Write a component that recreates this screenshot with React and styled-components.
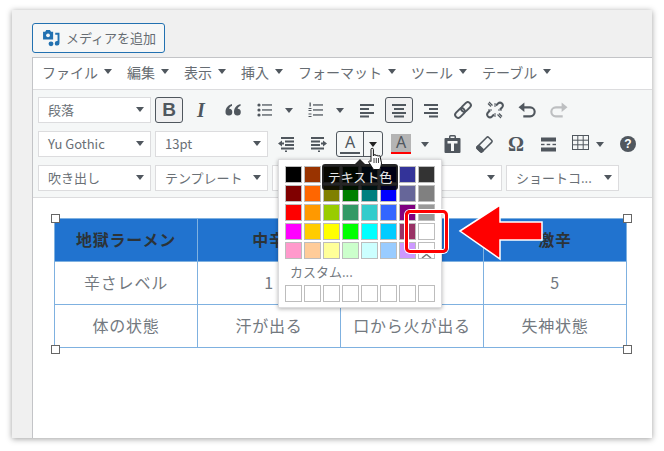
import React from "react";
import styled, { createGlobalStyle } from "styled-components";

const Global = createGlobalStyle`
  html, body { margin: 0; padding: 0; background: #fff; }
  body { font-family: "Noto Sans CJK JP", "Noto Sans", sans-serif; color: #50575e; }
  * { box-sizing: border-box; }
`;

const Page = styled.div`
  position: relative;
  width: 664px;
  height: 451px;
  padding: 10px 12px 13px;
  overflow: hidden;
`;
const Win = styled.div`
  height: 428px;
  background: #f0f0f0;
  box-shadow: 0 1px 6px rgba(0, 0, 0, 0.38);
  padding: 13px 0 0 20px;
  display: flex;
  flex-direction: column;
  align-items: flex-start;
`;
const MediaButton = styled.div`
  width: 133px;
  height: 30px;
  border: 1px solid #2271b1;
  border-radius: 3px;
  background: #f6f7f7;
  display: flex;
  align-items: center;
  gap: 6px;
  padding: 0 0 1px 9px;
  font-size: 13px;
  color: #666c72;
  margin-bottom: 4px;
`;
const Editor = styled.div`
  flex: 1;
  align-self: stretch;
  border-top: 1px solid #c3c4c7;
  border-left: 1px solid #c3c4c7;
  display: flex;
  flex-direction: column;
  background: #fff;
`;
const MenuBar = styled.div`
  height: 32px;
  padding: 0 0 4px 9px;
  display: flex;
  align-items: center;
  gap: 15px;
  background: #fff;
  border-bottom: 1px solid #dcdcde;
`;
const MenuItem = styled.div`
  display: flex;
  align-items: center;
  gap: 6px;
  font-size: 14px;
  line-height: 20px;
  color: #666c72;
  white-space: nowrap;
`;
const Caret = styled.i`
  display: block;
  width: 0;
  height: 0;
  border-left: 4px solid transparent;
  border-right: 4px solid transparent;
  border-top: 5px solid ${(p) => p.$color || "#50575e"};
`;
const Toolbar = styled.div`
  height: 108px;
  background: #f5f7f7;
  border-bottom: 1px solid #dcdcde;
  padding: 7px 0 0 5px;
  display: flex;
  flex-direction: column;
  gap: 8px;
`;
const Row = styled.div`
  display: flex;
  align-items: center;
  gap: 4px;
  height: 26px;
`;
const Select = styled.div`
  width: 113px;
  height: 26px;
  background: #fff;
  border: 1px solid #dcdcde;
  display: flex;
  align-items: center;
  justify-content: space-between;
  padding: 0 6px 2px 9px;
  font-size: 13px;
  color: #6a7076;
  white-space: nowrap;
`;
const Btn = styled.div`
  width: 28px;
  height: 26px;
  display: flex;
  align-items: center;
  justify-content: center;
  flex: none;
  border: 1px solid ${(p) => (p.$active ? "#50575e" : "transparent")};
  border-radius: 3px;
  background: ${(p) => (p.$active ? "#f0f0f1" : "transparent")};
  color: #50575e;
`;
const Split = styled.div`
  display: flex;
  align-items: center;
  flex: none;
`;
const CaretCell = styled.div`
  width: ${(p) => p.$w || 19}px;
  height: 26px;
  display: flex;
  align-items: center;
  justify-content: center;
`;
const BoldGlyph = styled.span`
  font: bold 19px "Liberation Sans", sans-serif;
`;
const ItalicGlyph = styled.span`
  font: italic bold 20px "Liberation Serif", serif;
`;
const OmegaGlyph = styled.span`
  font: bold 20px "Liberation Serif", serif;
  line-height: 20px;
`;
const TextColorBox = styled.div`
  width: 47px;
  height: 26px;
  display: flex;
  flex: none;
  border: 1px solid #50575e;
  border-radius: 3px;
`;
const ColorCell = styled.div`
  width: 27px;
  height: 24px;
  border-right: 1px solid #50575e;
  display: flex;
  align-items: center;
  justify-content: center;
`;
const ArrowCell = styled.div`
  flex: 1;
  display: flex;
  align-items: center;
  justify-content: center;
`;
const LetterA = styled.span`
  display: block;
  width: 20px;
  height: 20px;
  text-align: center;
  font: 16px/17px "Noto Sans", sans-serif;
  color: #50575e;
  border-bottom: 2px solid ${(p) => p.$bar};
  background: ${(p) => p.$bg || "transparent"};
`;
const HelpDot = styled.span`
  width: 16px;
  height: 16px;
  border-radius: 50%;
  background: #50575e;
  color: #fff;
  font: bold 12px/16px "Liberation Sans", sans-serif;
  text-align: center;
  margin-left: 8px;
`;
const Content = styled.div`
  flex: 1;
  background: #fff;
  padding: 20px 25px 0 21px;
`;
const Table = styled.table`
  position: relative;
  width: 573px;
  border-collapse: collapse;
  table-layout: fixed;
  font-size: 16px;
  letter-spacing: 0.8px;
  color: #73797f;
  text-align: center;
`;
const Th = styled.th`
  height: 43px;
  padding: 0 0 3px;
  background: #2173cf;
  border: 1px solid #7fb1e0;
  color: #2c3338;
  font-weight: 700;
`;
const Td = styled.td`
  height: 43px;
  padding: 0 0 2px;
  border: 1px solid #7fb1e0;
  font-weight: 400;
`;
const Handle = styled.span`
  position: absolute;
  width: 9px;
  height: 9px;
  background: #fff;
  border: 1px solid #666;
  left: ${(p) => p.$x}px;
  top: ${(p) => p.$y}px;
`;
const Popover = styled.div`
  position: absolute;
  left: 278px;
  top: 159px;
  width: 164px;
  height: 149px;
  background: #fff;
  border: 1px solid #dcdcde;
  box-shadow: 0 1px 4px rgba(0, 0, 0, 0.3);
  padding: 6px;
`;
const SwatchGrid = styled.div`
  display: grid;
  grid-template-columns: repeat(8, 17px);
  gap: 2px;
`;
const Swatch = styled.div`
  position: relative;
  width: 17px;
  height: 17px;
  border: 1px solid #bdbdbd;
  background: ${(p) => p.$c};
  overflow: hidden;
`;
const Chevron = styled.svg`
  position: absolute;
  left: 2px;
  bottom: -1px;
`;
const CustomLabel = styled.div`
  font-size: 13px;
  line-height: 18px;
  color: #73797f;
  margin: 4px 0 4px 5px;
`;
const Tooltip = styled.div`
  position: absolute;
  left: 322px;
  top: 164px;
  width: 76px;
  height: 26px;
  background: rgba(0, 0, 0, 0.85);
  border-radius: 3px;
  color: #e8e8e8;
  font-size: 13px;
  line-height: 25px;
  text-align: center;
  white-space: nowrap;
  &::before {
    content: "";
    position: absolute;
    left: 33px;
    top: -5px;
    border-left: 5px solid transparent;
    border-right: 5px solid transparent;
    border-bottom: 5px solid rgba(0, 0, 0, 0.85);
  }
`;
const Highlight = styled.div`
  position: absolute;
  left: 405px;
  top: 210px;
  width: 43px;
  height: 43px;
  border: 3px solid #f00;
  border-radius: 5px;
  box-shadow: 0 0 0 1px #fff, inset 0 0 0 1px #fff;
`;
const Overlay = styled.svg`
  position: absolute;
  left: ${(p) => p.$x}px;
  top: ${(p) => p.$y}px;
  overflow: visible;
`;

const C = "#50575e";
const Lines = ({ items }) => (
  <svg width="16" height="16" viewBox="0 0 16 16" fill={C}>
    {items.map(([x, y, w], i) => (
      <rect key={i} x={x} y={y} width={w} height="2" />
    ))}
  </svg>
);
const BulletList = () => (
  <svg width="16" height="16" viewBox="0 0 16 16" fill={C}>
    <circle cx="2" cy="3" r="1.6" />
    <circle cx="2" cy="8" r="1.6" />
    <circle cx="2" cy="13" r="1.6" />
    <rect x="5" y="2.3" width="10" height="1.3" />
    <rect x="5" y="7.3" width="10" height="1.3" />
    <rect x="5" y="12.3" width="10" height="1.3" />
  </svg>
);
const NumList = () => (
  <svg width="16" height="16" viewBox="0 0 16 16" fill={C}>
    <rect x="1.5" y="0.5" width="1.3" height="4" />
    <rect x="0.5" y="6" width="3" height="1" />
    <rect x="0.5" y="8" width="3" height="1" />
    <rect x="0.5" y="11.5" width="3" height="1" />
    <rect x="0.5" y="14" width="3" height="1" />
    <rect x="5" y="2.3" width="10" height="1.3" />
    <rect x="5" y="7.3" width="10" height="1.3" />
    <rect x="5" y="12.3" width="10" height="1.3" />
  </svg>
);
const Quote = () => (
  <svg width="16" height="14" viewBox="0 0 16 14" fill={C}>
    <path d="M7 1C3.5 2 .5 4.5.5 9a3.4 3.4 0 1 0 3.6-3.3C4.5 4.3 5.600 3.300 7 3zM15.500 1c-3.500 1-6.500 3.500-6.500 8a3.400 3.400 0 1 0 3.600-3.300c.4-1.400 1.500-2.400 2.900-2.700z" />
  </svg>
);
const Outdent = ({ flip }) => (
  <svg width="17" height="16" viewBox="0 0 17 16" fill={C} style={flip ? { transform: "scaleX(-1)" } : undefined}>
    <rect x="3" y="1" width="13" height="2" />
    <rect x="7" y="4.500" width="9" height="2" />
    <rect x="7" y="8" width="9" height="2" />
    <rect x="3" y="11.500" width="13" height="2" />
    <rect x="7" y="14.500" width="2" height="1.500" />
    <path d="M0 7.500 4 4.500v2h2v2H4v2z" />
  </svg>
);
const LinkIcon = () => (
  <svg width="18" height="18" viewBox="0 0 18 18" fill="none" stroke={C} strokeWidth="2">
    <rect x="-5.500" y="-3" width="11" height="6" rx="3" transform="translate(12 6) rotate(-45)" />
    <rect x="-5.500" y="-3" width="11" height="6" rx="3" transform="translate(6 12) rotate(-45)" />
  </svg>
);
const UnlinkIcon = () => (
  <svg width="18" height="18" viewBox="0 0 18 18" fill="none" stroke={C} strokeWidth="2">
    <path d="M10 4.500 12 2.500a3 3 0 0 1 4 0 3 3 0 0 1 0 4L14 8.500" />
    <path d="M8 13.500 6 15.500a3 3 0 0 1-4 0 3 3 0 0 1 0-4L4 9.500" />
    <path d="M2 2.500 5 5.500M3 1l3.500 3.500" strokeWidth="1.200" />
    <path d="M16 15.500 13 12.500M15 17l-3.500-3.500" strokeWidth="1.200" />
    <path d="M6 9h-4M12 9h4M9 6V2M9 12v4" strokeWidth="1" />
  </svg>
);
const UndoIcon = ({ color = C, flip }) => (
  <svg width="18" height="16" viewBox="0 0 17 15" fill="none" style={flip ? { transform: "scaleX(-1)" } : undefined}>
    <path d="M3 5h8.500a4 4 0 0 1 0 8.500H5" stroke={color} strokeWidth="2" />
    <path d="M6 .5v9L.5 5z" fill={color} />
  </svg>
);
const PasteIcon = () => (
  <svg width="17" height="18" viewBox="0 0 17 18">
    <path d="M1.500 3H5V1.500A1.500 1.500 0 0 1 6.500 0h4A1.500 1.500 0 0 1 12 1.500V3h3.500a1 1 0 0 1 1 1v13a1 1 0 0 1-1 1h-14a1 1 0 0 1-1-1V4a1 1 0 0 1 1-1z" fill={C} />
    <rect x="6.500" y="1.500" width="4" height="1.500" fill="#f5f7f7" />
    <path d="M3.500 6h10v2.500h-3.500V16H7V8.500H3.500z" fill="#f5f7f7" />
  </svg>
);
const EraserIcon = () => (
  <svg width="17" height="17" viewBox="0 0 17 17" fill="none">
    <g transform="rotate(-45 8.500 8.500)" stroke={C} strokeWidth="1.500">
      <rect x="0.500" y="5" width="16" height="7" rx="1.500" />
      <rect x="0.500" y="5" width="3.500" height="7" rx="1.500" fill={C} />
    </g>
  </svg>
);
const HrIcon = () => (
  <svg width="15" height="15" viewBox="0 0 15 15" fill={C}>
    <rect y="0.500" width="15" height="4" />
    <rect y="10.500" width="15" height="4" />
    <rect x="0" y="6.800" width="3.500" height="1.400" />
    <rect x="5.700" y="6.800" width="3.500" height="1.400" />
    <rect x="11.500" y="6.800" width="3.500" height="1.400" />
  </svg>
);
const TableIcon = () => (
  <svg width="17" height="15" viewBox="0 0 17 15" fill="none" stroke={C} strokeWidth="1" style={{ marginTop: -4 }}>
    <rect x="0.500" y="0.500" width="16" height="14" />
    <path d="M5.800 .5v14M11.200 .5v14M.5 5.200h16M.5 9.800h16" />
  </svg>
);
const MediaIcon = () => (
  <svg width="18" height="18" viewBox="0 0 17 17" fill="#2271b1">
    <path d="M1 2.500h2L4 1h3.500l1 1.500H10.500v7.500H1z" />
    <circle cx="5.700" cy="6" r="1.800" fill="#f6f7f7" />
    <path d="M12.500 3.500H16.500V13.500a2.200 2.200 0 1 1-1.800-2.200V5.500h-2.200z" />
    <circle cx="8.500" cy="14" r="2.300" />
  </svg>
);

const menus = ["ファイル", "編集", "表示", "挿入", "フォーマット", "ツール", "テーブル"];
const swatches = [
  "#000000", "#993300", "#333300", "#003300", "#003366", "#000080", "#333399", "#333333",
  "#800000", "#FF6600", "#808000", "#008000", "#008080", "#0000FF", "#666699", "#808080",
  "#FF0000", "#FF9900", "#99CC00", "#339966", "#33CCCC", "#3366FF", "#800080", "#999999",
  "#FF00FF", "#FFCC00", "#FFFF00", "#00FF00", "#00FFFF", "#00CCFF", "#993366", "#FFFFFF",
  "#FF99CC", "#FFCC99", "#FFFF99", "#CCFFCC", "#CCFFFF", "#99CCFF", "#CC99FF", "#FFFFFF",
];
const rows = [
  ["辛さレベル", "1", "3", "5"],
  ["体の状態", "汗が出る", "口から火が出る", "失神状態"],
];

export default function App() {
  return (
    <Page>
      <Global />
      <Win>
        <MediaButton>
          <MediaIcon />
          メディアを追加
        </MediaButton>
        <Editor>
          <MenuBar>
            {menus.map((m) => (
              <MenuItem key={m}>
                {m}
                <Caret />
              </MenuItem>
            ))}
          </MenuBar>
          <Toolbar>
            <Row>
              <Select>段落<Caret /></Select>
              <Btn $active><BoldGlyph>B</BoldGlyph></Btn>
              <Btn><ItalicGlyph>I</ItalicGlyph></Btn>
              <Btn><Quote /></Btn>
              <Split>
                <Btn><BulletList /></Btn>
                <CaretCell><Caret /></CaretCell>
              </Split>
              <Split>
                <Btn><NumList /></Btn>
                <CaretCell><Caret /></CaretCell>
              </Split>
              <Btn><Lines items={[[1, 2, 14], [1, 6, 9], [1, 10, 14], [1, 13.500, 9]]} /></Btn>
              <Btn $active><Lines items={[[1, 2, 14], [3, 6, 10], [1, 10, 14], [3, 13.500, 10]]} /></Btn>
              <Btn><Lines items={[[1, 2, 14], [6, 6, 9], [1, 10, 14], [6, 13.500, 9]]} /></Btn>
              <Btn><LinkIcon /></Btn>
              <Btn><UnlinkIcon /></Btn>
              <Btn><UndoIcon /></Btn>
              <Btn><UndoIcon color="#bdbfc1" flip /></Btn>
            </Row>
            <Row>
              <Select>Yu Gothic<Caret /></Select>
              <Select>13pt<Caret /></Select>
              <Btn><Outdent /></Btn>
              <Btn><Outdent flip /></Btn>
              <TextColorBox>
                <ColorCell><LetterA $bar={C}>A</LetterA></ColorCell>
                <ArrowCell><Caret $color="#222" /></ArrowCell>
              </TextColorBox>
              <Split>
                <Btn><LetterA $bar="#f00" $bg="#b4b4b4">A</LetterA></Btn>
                <CaretCell><Caret /></CaretCell>
              </Split>
              <Btn><PasteIcon /></Btn>
              <Btn><EraserIcon /></Btn>
              <Btn><OmegaGlyph>Ω</OmegaGlyph></Btn>
              <Btn><HrIcon /></Btn>
              <Split>
                <Btn><TableIcon /></Btn>
                <CaretCell $w={12}><Caret /></CaretCell>
              </Split>
              <Btn><HelpDot>?</HelpDot></Btn>
            </Row>
            <Row>
              <Select>吹き出し<Caret /></Select>
              <Select>テンプレート<Caret /></Select>
              <Select><span /><Caret /></Select>
              <Select><span /><Caret /></Select>
              <Select>ショートコ...<Caret /></Select>
            </Row>
          </Toolbar>
          <Content>
            <Table>
              <thead>
                <tr>
                  <Th>地獄ラーメン</Th>
                  <Th>中辛</Th>
                  <Th>大辛</Th>
                  <Th>激辛</Th>
                </tr>
              </thead>
              <tbody>
                {rows.map((r) => (
                  <tr key={r[0]}>
                    {r.map((c, i) => (
                      <Td key={i}>{c}</Td>
                    ))}
                  </tr>
                ))}
              </tbody>
            </Table>
          </Content>
        </Editor>
      </Win>
      <Handle $x={51} $y={214} />
      <Handle $x={623} $y={214} />
      <Handle $x={51} $y={345} />
      <Handle $x={623} $y={345} />
      <Popover>
        <SwatchGrid>
          {swatches.map((c, i) => (
            <Swatch key={i} $c={c}>
              {i === 39 && (
                <Chevron width="11" height="6" viewBox="0 0 11 6" fill="none">
                  <path d="M1 5 5.500 1.500 10 5" stroke="#777" strokeWidth="1.500" />
                </Chevron>
              )}
            </Swatch>
          ))}
        </SwatchGrid>
        <CustomLabel>カスタム...</CustomLabel>
        <SwatchGrid>
          {Array.from({ length: 8 }, (_, i) => (
            <Swatch key={i} $c="#fff" />
          ))}
        </SwatchGrid>
      </Popover>
      <Tooltip>テキスト色</Tooltip>
      <Highlight />
      <Overlay $x={0} $y={0} width="664" height="451" viewBox="0 0 664 451">
        <path d="M460 231 500 205V222H542V240H500V259Z" fill="#f00" stroke="#fff" strokeWidth="1.500" />
      </Overlay>
      <Overlay $x={368} $y={148} width="15" height="22" viewBox="0 0 15 22">
        <path
          d="M3 1.500a1.200 1.200 0 0 1 2.400 0V8l.4-.5a1.100 1.100 0 0 1 2.200.4 1.100 1.100 0 0 1 2.100.4 1.100 1.100 0 0 1 2.100.6l1.300 6c0 2.600-1.300 5.600-2 6.600H5.500L1 14.500c-.7-1.200.6-2.300 1.800-1.200l.2.200z"
          fill="#fff"
          stroke="#111"
          strokeWidth="1"
        />
        <path d="M6 10v5M8.300 10v5M10.500 10v5" stroke="#111" strokeWidth=".8" />
      </Overlay>
    </Page>
  );
}
